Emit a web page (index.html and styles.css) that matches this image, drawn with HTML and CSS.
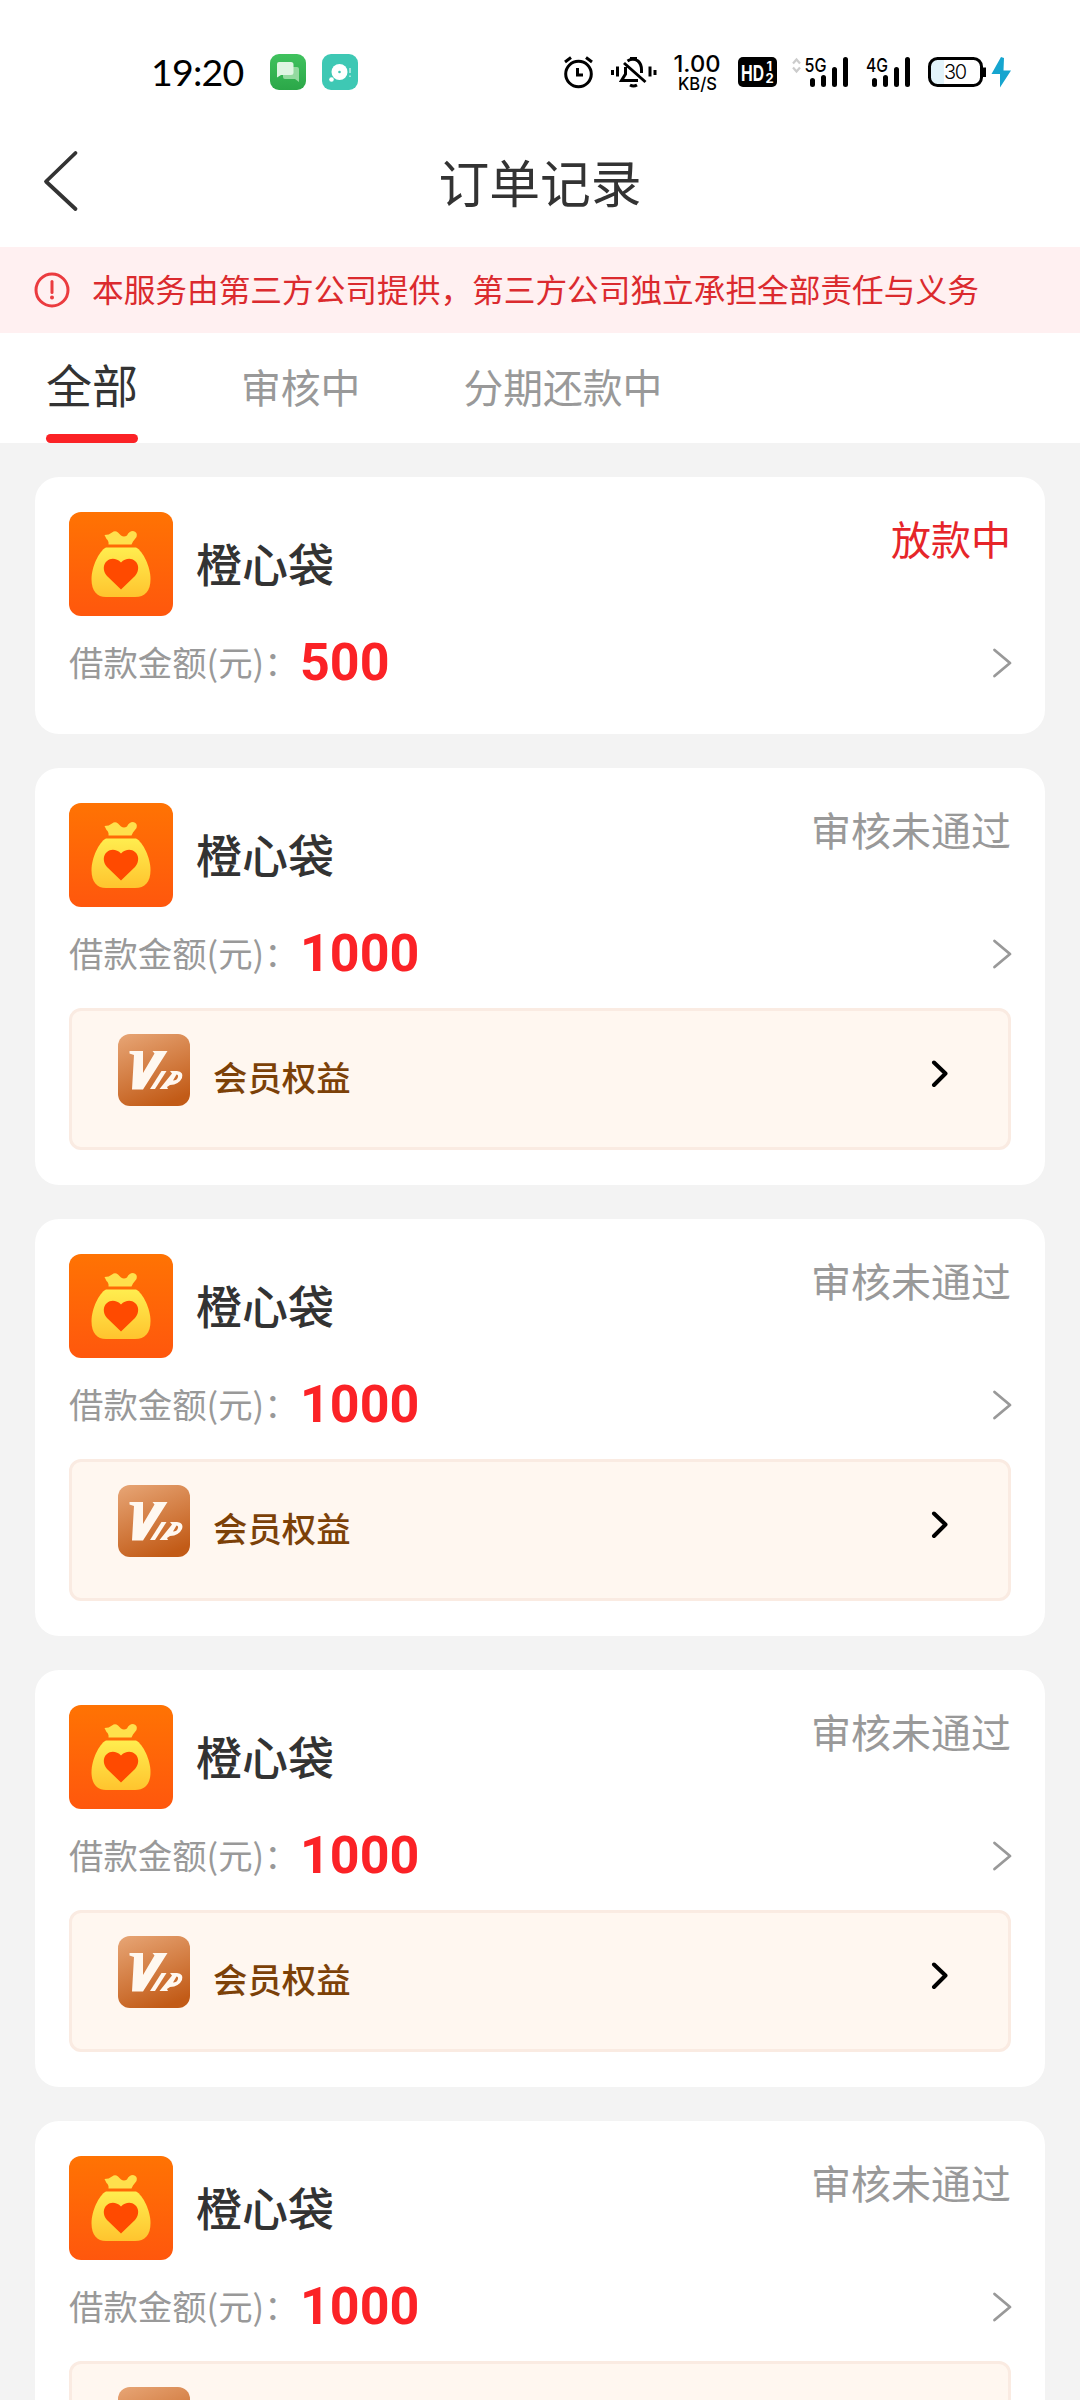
FILE: index.html
```html
<!DOCTYPE html>
<html lang="zh-CN">
<head>
<meta charset="utf-8">
<title>订单记录</title>
<link rel="stylesheet" href="styles.css">
</head>
<body>
<svg class="defs" width="0" height="0" aria-hidden="true">
  <defs>
    <linearGradient id="g-app" x1="0" y1="0" x2="0" y2="1"><stop offset="0" stop-color="#ff7303"/><stop offset="1" stop-color="#ff570d"/></linearGradient>
    <linearGradient id="g-bag" x1="0" y1="0" x2="0" y2="1"><stop offset="0" stop-color="#ffed4f"/><stop offset="1" stop-color="#ffc42e"/></linearGradient>
    <linearGradient id="g-vip" x1="0.2" y1="0" x2="0.6" y2="1"><stop offset="0" stop-color="#e5a170"/><stop offset="1" stop-color="#c25b17"/></linearGradient>
    <linearGradient id="g-msg" x1="0" y1="0" x2="0" y2="1"><stop offset="0" stop-color="#40c25e"/><stop offset="1" stop-color="#2ba748"/></linearGradient>
  </defs>
  <symbol id="i-bag" viewBox="0 0 104 104">
    <rect width="104" height="104" rx="12" fill="url(#g-app)"/>
    <path d="M35.500 23Q40 23 43 20.500Q46 18 49 20.500L52 23.500Q55 25.500 58 23.500Q60 19 64 19Q69 20 67.500 25L64 29.500L62.500 32.500H39.500Q40 29 37.500 27Z" fill="#ffe04c"/>
    <path d="M37 35.500H67C74 39 81.500 55 81.500 67C81.500 79 76 85 66 85H37C28 85 22.500 79 22.500 67C22.500 55 30 39 37 35.500Z" fill="url(#g-bag)"/>
    <path d="M52 77.500L38 64C33.500 59 34 52 38 49C42 45.500 48 46.500 52 50.500C56 46.500 62 45.500 66 49C70 52 70.500 59 66 64Z" fill="#ff4a00"/>
  </symbol>
  <symbol id="i-vip" viewBox="0 0 72 72">
    <rect width="72" height="72" rx="12" fill="url(#g-vip)"/>
    <path d="M11.500 17H25V39L36.500 19.500L34.500 17H49.500L25 55.500H14L16 21L11.500 19.500Z" fill="#fff8f0"/>
    <path d="M32 55L43.500 37H48.500L37 55Z" fill="#fff8f0"/>
    <path fill-rule="evenodd" d="M41.500 55L54 39.500L52 37H59Q66 38 64 44Q61 50.500 52 51L49 53L50 55ZM55 46.500Q59 46.500 60 43Q60.500 40.500 58.500 40.500Z" fill="#fff8f0"/>
  </symbol>
  <symbol id="i-next" viewBox="0 0 20 32"><path d="M2.500 3L18 16L2.500 29" fill="none" stroke="#999" stroke-width="2.800" stroke-linecap="round" stroke-linejoin="round"/></symbol>
  <symbol id="i-go" viewBox="0 0 18 28"><path d="M3 2.500L14.500 13.500L3 25" fill="none" stroke="#000" stroke-width="4" stroke-linecap="round" stroke-linejoin="round"/></symbol>
</svg>

<header class="statusbar">
  <div class="status-left">
    <span class="clock">19:20</span>
    <svg width="36" height="36" viewBox="0 0 36 36">
      <rect width="36" height="36" rx="9" fill="url(#g-msg)"/>
      <path d="M13 13h14q2 0 2 2v13l-4-3H15q-2 0-2-2z" fill="#93da9f"/>
      <path d="M9 8h12q2.500 0 2.500 2.500V19q0 2-2.500 2H11l-4 2.500V10Q7 8 9 8z" fill="#dff5e2"/>
    </svg>
    <svg width="36" height="36" viewBox="0 0 36 36">
      <rect width="36" height="36" rx="9" fill="#3ec8b4"/>
      <circle cx="17.500" cy="18" r="8" fill="#fff"/><circle cx="17.500" cy="18" r="1.300" fill="#3ec8b4"/><circle cx="9.500" cy="25.500" r="2.300" fill="#fff"/>
      <path d="M28 14v5M28 21.500v1.500" stroke="#b9ece4" stroke-width="1.600"/>
    </svg>
  </div>
  <div class="status-right">
    <svg width="40" height="44" viewBox="560 50 40 44" fill="none" stroke="#000" stroke-width="3">
      <circle cx="578.500" cy="74" r="12.800"/><path d="M577.500 68v7h5.500M565 62l6-4.500M586 57.500l6 4.500"/>
    </svg>
    <svg width="66" height="44" viewBox="600 50 66 44" fill="none" stroke="#000" stroke-width="3">
      <path d="M612.500 70v5M617.500 66.500v10M650 66.500v10M655 70v5"/>
      <path d="M627.500 61Q633 57.500 638 61Q641.500 64 641.500 70V73M625.500 67V74L621.500 80.500H638M630 58.500h7M630 85q3.500 2 7 0M624 63L645.500 82"/>
    </svg>
    <svg width="64" height="44" viewBox="666 50 64 44">
      <text class="t-net" x="697" y="71.500" font-size="23" textLength="47" lengthAdjust="spacingAndGlyphs">1.00</text>
      <text class="t-net" x="697.500" y="90" font-size="17.500" textLength="39" lengthAdjust="spacingAndGlyphs">KB/S</text>
    </svg>
    <svg width="56" height="44" viewBox="730 50 56 44">
      <rect x="738" y="57" width="39" height="30" rx="5"/>
      <text class="t-hd" x="741" y="80.500" font-size="22" textLength="23" lengthAdjust="spacingAndGlyphs">HD</text>
      <text class="t-hd" x="766.500" y="70.500" font-size="13">1</text><text class="t-hd" x="765.500" y="82.500" font-size="13">2</text>
    </svg>
    <svg width="72" height="44" viewBox="786 50 72 44">
      <path d="M793 63.500l3.500-4 3.500 4M793 67.500l3.500 4 3.500-4" fill="none" stroke="#ccc" stroke-width="2.200"/>
      <text class="t-sig" x="804.500" y="71.500" font-size="19" textLength="22" lengthAdjust="spacingAndGlyphs">5G</text>
      <path d="M812.500 80.500v4M823.500 77.500v7M834.500 69.500v15M845.500 59.500v25" stroke="#000" stroke-width="5" stroke-linecap="round"/>
    </svg>
    <svg width="62" height="44" viewBox="858 50 62 44">
      <text class="t-sig" x="866" y="71.500" font-size="19" textLength="22" lengthAdjust="spacingAndGlyphs">4G</text>
      <path d="M874.500 80.500v4M885.500 77.500v7M896.500 69.500v15M907.500 59.500v25" stroke="#000" stroke-width="5" stroke-linecap="round"/>
    </svg>
    <svg width="100" height="44" viewBox="920 50 100 44">
      <path d="M938 59h6v27h-6q-8 0-8-8V67q0-8 8-8z" fill="#e2f3fa"/>
      <rect x="929.500" y="58.500" width="52" height="27" rx="8" fill="none" stroke="#000" stroke-width="3"/>
      <path d="M984.500 67.500v9.500" stroke="#000" stroke-width="3"/>
      <text class="t-bat" x="955.500" y="79" font-size="20" textLength="23">30</text>
      <path d="M1001 57L991.500 74H1000V87.500L1011 70.500H1003.500L1004 58Z" fill="#16a5cf"/>
    </svg>
  </div>
</header>

<nav class="titlebar">
  <svg class="back" width="40" height="64" viewBox="0 0 40 64"><path d="M34.500 4L5 32.500L34.500 60" fill="none" stroke="#333" stroke-width="3.800" stroke-linecap="round" stroke-linejoin="round"/></svg>
  <h1>订单记录</h1>
</nav>

<div class="notice">
  <svg width="36" height="36" viewBox="0 0 36 36"><circle cx="18" cy="18" r="16" fill="none" stroke="#eb3b3f" stroke-width="3"/><path d="M18 9.500v11" stroke="#eb3b3f" stroke-width="3" stroke-linecap="round"/><circle cx="18" cy="25.500" r="2" fill="#eb3b3f"/></svg>
  <p>本服务由第三方公司提供，第三方公司独立承担全部责任与义务</p>
</div>

<div class="tabs">
  <span class="tab active">全部</span>
  <span class="tab">审核中</span>
  <span class="tab">分期还款中</span>
</div>

<main class="orders">
  <article class="card">
    <div class="head"><svg class="logo"><use href="#i-bag"/></svg><h2>橙心袋</h2><span class="state paying">放款中</span></div>
    <div class="amount"><span class="label">借款金额(元)：</span><b>500</b><svg class="next"><use href="#i-next"/></svg></div>
  </article>
  <article class="card">
    <div class="head"><svg class="logo"><use href="#i-bag"/></svg><h2>橙心袋</h2><span class="state">审核未通过</span></div>
    <div class="amount"><span class="label">借款金额(元)：</span><b>1000</b><svg class="next"><use href="#i-next"/></svg></div>
    <div class="vip"><svg class="badge"><use href="#i-vip"/></svg><span>会员权益</span><svg class="go"><use href="#i-go"/></svg></div>
  </article>
  <article class="card">
    <div class="head"><svg class="logo"><use href="#i-bag"/></svg><h2>橙心袋</h2><span class="state">审核未通过</span></div>
    <div class="amount"><span class="label">借款金额(元)：</span><b>1000</b><svg class="next"><use href="#i-next"/></svg></div>
    <div class="vip"><svg class="badge"><use href="#i-vip"/></svg><span>会员权益</span><svg class="go"><use href="#i-go"/></svg></div>
  </article>
  <article class="card">
    <div class="head"><svg class="logo"><use href="#i-bag"/></svg><h2>橙心袋</h2><span class="state">审核未通过</span></div>
    <div class="amount"><span class="label">借款金额(元)：</span><b>1000</b><svg class="next"><use href="#i-next"/></svg></div>
    <div class="vip"><svg class="badge"><use href="#i-vip"/></svg><span>会员权益</span><svg class="go"><use href="#i-go"/></svg></div>
  </article>
  <article class="card">
    <div class="head"><svg class="logo"><use href="#i-bag"/></svg><h2>橙心袋</h2><span class="state">审核未通过</span></div>
    <div class="amount"><span class="label">借款金额(元)：</span><b>1000</b><svg class="next"><use href="#i-next"/></svg></div>
    <div class="vip"><svg class="badge"><use href="#i-vip"/></svg></div>
  </article>
</main>
</body>
</html>
```
FILE: styles.css
```css
* { box-sizing: border-box; margin: 0; padding: 0; }
html { height: 2400px; overflow: hidden; }
body {
  width: 1080px;
  height: 2400px;
  overflow: hidden;
  background: #f3f3f3;
  color: #333;
  font-family: "Noto Sans CJK SC", sans-serif;
  display: flex;
  flex-direction: column;
}
svg { display: block; flex: none; }
.defs { position: absolute; }

.statusbar {
  flex: none;
  height: 130px;
  padding: 50px 60px 36px 151px;
  background: #fff;
  display: flex;
  justify-content: space-between;
}
.status-left { display: flex; align-items: center; gap: 16px; }
.clock {
  width: 103px;
  font: 400 37.500px/44px Lato, sans-serif;
  letter-spacing: -0.800px;
  color: #000;
  white-space: nowrap;
}
.status-right { display: flex; }
.t-net { font-family: Inter, sans-serif; font-weight: 500; text-anchor: middle; }
.t-hd { font-family: Inter, sans-serif; font-weight: 700; fill: #fff; }
.t-sig { font-family: Inter, sans-serif; font-weight: 500; }
.t-bat { font-family: Inter, sans-serif; font-weight: 300; text-anchor: middle; }

.titlebar {
  flex: none;
  height: 117px;
  padding: 0 41px;
  background: #fff;
  display: grid;
  grid-template-columns: 40px 1fr 40px;
}
.back { margin-top: 19px; }
.titlebar h1 { font-size: 50.800px; font-weight: 400; line-height: 102px; text-align: center; }

.notice {
  flex: none;
  height: 86px;
  padding: 0 34px;
  background: #fff0f1;
  display: flex;
  align-items: center;
  gap: 22px;
}
.notice p { height: 86px; font-size: 31.680px; line-height: 83px; color: #db2a2e; white-space: nowrap; }

.tabs {
  flex: none;
  height: 110px;
  padding-left: 46px;
  background: #fff;
  display: flex;
  gap: 103px;
}
.tab { font-size: 39.800px; line-height: 106px; color: #999; }
.tab.active {
  height: 110px;
  font-size: 46px;
  line-height: 100px;
  color: #333;
  display: flex;
  flex-direction: column;
}
.tab.active::after { content: ""; height: 9px; margin-top: 1px; border-radius: 4.500px; background: #fb2226; }

.orders {
  flex: 1;
  min-height: 0;
  overflow: hidden;
  padding: 34px 35px 0;
  display: flex;
  flex-direction: column;
  gap: 34px;
}
.card { flex: none; padding: 35px 34px; border-radius: 24px; background: #fff; }
.head { height: 104px; display: flex; }
.logo { width: 104px; height: 104px; }
.head h2 { margin-left: 23px; font-size: 46px; font-weight: 500; line-height: 101px; }
.state { margin-left: auto; font-size: 40px; line-height: 52px; color: #999; }
.state.paying { color: #e62529; }
.amount { height: 83px; display: flex; align-items: center; padding-top: 11px; }
.label { width: 231px; height: 52px; font-size: 34.400px; line-height: 49px; color: #999; white-space: nowrap; }
.amount b { font: 700 52px/60px Roboto, sans-serif; color: #fb2226; }
.next { width: 20px; height: 32px; margin-left: auto; margin-right: -1px; }
.vip {
  height: 142px;
  margin-top: 18px;
  padding: 23px 59px 0 46px;
  border: 3px solid #faebe2;
  border-radius: 12px;
  background: #fff7f0;
  display: flex;
}
.badge { width: 72px; height: 72px; }
.vip span { margin-left: 23px; font-size: 34.400px; font-weight: 500; line-height: 84px; color: #7c4108; }
.go { width: 18px; height: 28px; margin: 26px 0 0 auto; }
```
